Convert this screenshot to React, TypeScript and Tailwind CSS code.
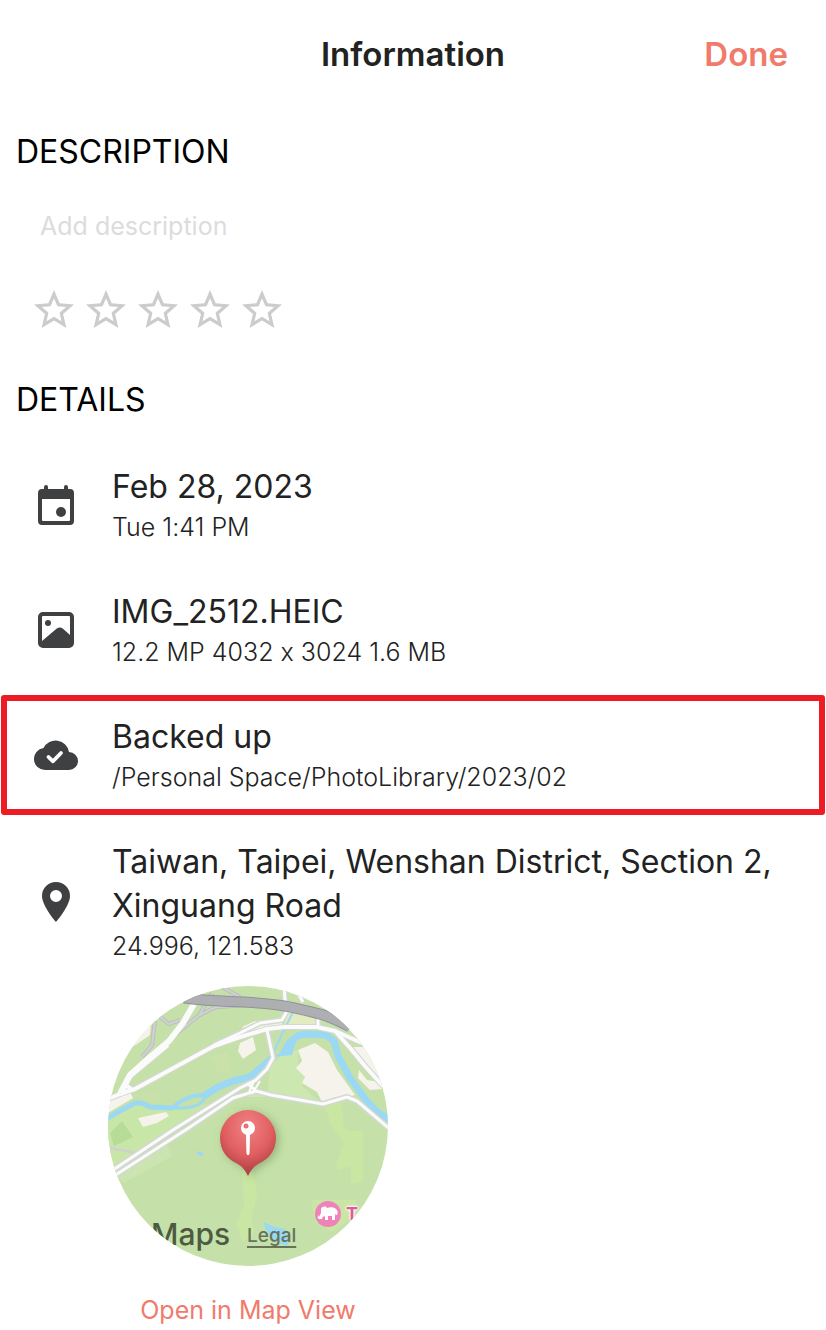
import type { ReactNode } from 'react';
import { useState } from 'react';
import { MdStar, MdStarBorder } from 'react-icons/md';

type DetailRowProps = {
  icon: ReactNode;
  title: string;
  subtitle: string;
  highlighted?: boolean;
};

function CalendarIcon() {
  return (
    <svg viewBox="0 0 36 40" className="h-10 w-9" fill="#3f4042" aria-hidden="true">
      <path
        fillRule="evenodd"
        d="M6 2a2 2 0 0 1 4 0v2h16V2a2 2 0 0 1 4 0v2h2a4 4 0 0 1 4 4v28a4 4 0 0 1-4 4H4a4 4 0 0 1-4-4V8a4 4 0 0 1 4-4h2V2ZM4 14v21a1 1 0 0 0 1 1h26a1 1 0 0 0 1-1V14H4Z"
      />
      <circle cx="23" cy="27" r="5" />
    </svg>
  );
}

function PictureIcon() {
  return (
    <svg viewBox="0 0 36 36" className="h-9 w-9" fill="#3f4042" aria-hidden="true">
      <path
        fillRule="evenodd"
        d="M5 0h26a5 5 0 0 1 5 5v26a5 5 0 0 1-5 5H5a5 5 0 0 1-5-5V5a5 5 0 0 1 5-5Zm0 4a1 1 0 0 0-1 1v24l14.500-12.200a5 5 0 0 1 6.500 0L32 23V5a1 1 0 0 0-1-1H5Z"
      />
      <circle cx="10" cy="11" r="3" />
    </svg>
  );
}

function CloudCheckIcon() {
  return (
    <svg viewBox="0 0 44 30" className="h-[30px] w-11" aria-hidden="true">
      <path
        fill="#3f4042"
        d="M11 30a11 11 0 0 1-1.500-21.900A13.500 13.500 0 0 1 35 12A9 9 0 0 1 35 30H11Z"
      />
      <path
        d="m14.500 17 4.500 4.300 8-8.300"
        fill="none"
        stroke="white"
        strokeWidth="3.800"
        strokeLinecap="round"
        strokeLinejoin="round"
      />
    </svg>
  );
}

function PlaceIcon() {
  return (
    <svg viewBox="0 0 28 40" className="h-10 w-7" fill="#3f4042" aria-hidden="true">
      <path
        fillRule="evenodd"
        d="M14 0a14 14 0 0 1 14 14c0 10-14 26-14 26S0 24 0 14A14 14 0 0 1 14 0Zm0 8a6 6 0 1 0 0 12 6 6 0 0 0 0-12Z"
      />
    </svg>
  );
}

function DetailRow({ icon, title, subtitle, highlighted }: DetailRowProps) {
  return (
    <li
      className={`mx-px flex items-center gap-8 rounded-[3px] border-[6px] py-[14px] pr-8 pl-[25px] ${
        highlighted ? 'border-[#ed1c24]' : 'border-transparent'
      }`}
    >
      <div className="flex w-12 shrink-0 justify-center">{icon}</div>
      <div className="min-w-0">
        <h3 className="text-[32px] leading-[44px]">{title}</h3>
        {/* calt would turn the "x" between dimensions into a multiplication sign */}
        <p className="text-[25px] leading-9 font-light [font-feature-settings:'calt'_0]">{subtitle}</p>
      </div>
    </li>
  );
}

function MapDrawing() {
  return (
    <svg viewBox="0 0 280 280" className="h-full w-full" fill="none" aria-hidden="true">
      <defs>
        <radialGradient id="balloon" cx="0.5" cy="0.25" r="0.75">
          <stop offset="0" stopColor="#ee8283" />
          <stop offset="0.55" stopColor="#e26062" />
          <stop offset="1" stopColor="#a83c3e" />
        </radialGradient>
        <filter id="balloonShadow" x="-40%" y="-40%" width="180%" height="180%">
          <feDropShadow dx="3" dy="2" stdDeviation="4" floodColor="#55703f" floodOpacity="0.4" />
        </filter>
      </defs>

      <rect width="280" height="280" fill="#c5e1a9" />

      {/* lighter and darker parkland */}
      <path d="M132 111 160 106 162 80 175 68 190 64 190 84 197 92 194 100 215 119 162 111Z" fill="#cce8b0" />
      <path d="M0 134 30 117 64 124 100 118 130 104 70 142 0 190Z" fill="#c8e6a8" />
      <path d="M35 106 54 104 50 118 32 114Z" fill="#cae0aa" />
      <path d="M101 71 118 66 122 84 111 86Z" fill="#cae2aa" />
      <path d="M2 147 14 135 25 151 6 160Z" fill="#b7dc98" />
      <path d="M9 190 58 158 64 170 16 197Z" fill="#cbe4b2" />
      <path d="M216 119 233 112 236 144 224 140Z" fill="#c9e7a0" />
      <path d="M220 134 242 145 255 145 255 195 243 198 243 180 230 184 228 178 236 158Z" fill="#c9e7a2" />
      <path d="M134 184 146 186 149 210 143 232 147 246 135 256 128 238 136 220Z" fill="#c9e7a2" />
      <path d="M203 214 248 214 244 232 224 246 207 235Z" fill="#cae5a5" />
      <path d="M180 25 211 32 209 39 176 40Z" fill="#e3ebc0" />

      {/* built-up areas */}
      <g fill="#f6f3ec">
        <path d="M190 64 207 57 220 66 229 84 247 109 239 111 215 118 209 106 194 97 197 91 188 82 194 75Z" />
        <path d="M245 61 265 61 282 96 272 94Z" />
        <path d="M251 84 259 94 272 96 274 103 262 104 250 92Z" />
        <path d="M132 57 145 51 148 64 135 73 130 65Z" />
        <path d="M134 41 147 35 174 35 174 40 140 48Z" />
        <path d="M30 132 58 126 61 130 49 137 35 141Z" />
        <path d="M0 114 22 106 25 112 0 127Z" />
        <path d="M43 36 42 49 26 60 30 42Z" />
      </g>

      {/* water */}
      <g stroke="#9ad8f3" strokeLinejoin="round">
        <path d="M-3 134 10 126 27 117 34 117 42 121 65 122" strokeWidth="5" />
        <path d="M65 122C77 122 92 123 97 111" strokeWidth="3" />
        <path d="M65 121C73 114 83 108 97 109" strokeWidth="4" />
        <path d="M96 110 110 101 125 95 142 91 155 80 166 70" strokeWidth="7" />
        <path d="M177 3 180 18 184 28 175 46 164 70" strokeWidth="2" />
        <path d="M188 50 198 48 218 49 226 55 230 70 242 92 258 114 269 126 283 134" strokeWidth="7" />
      </g>
      <path d="M163 71 171 68 179 54 189 47 198 49 189 54 186 62 184 69 174 70Z" fill="#9ad8f3" />
      <path d="M88 165 96 167 94 170 90 169Z" fill="#9ad8f3" />
      <path d="M155 236 167 241 177 243 182 252 179 260 168 256 160 248Z" fill="#9ad8f3" />

      {/* minor roads, casing first */}
      <g stroke="#b6babb" strokeWidth="4">
        <path d="M47 35 44 59 34 71" />
        <path d="M52 31 61 38 72 34" />
        <path d="M67 49 90 30 108 21 142 19" />
        <path d="M92 28 104 7M114 1 132 11" />
      </g>
      <g stroke="#cfd1d1" strokeWidth="2.500">
        <path d="M47 35 44 59 34 71" />
        <path d="M52 31 61 38 72 34" />
        <path d="M67 49 90 30 108 21 142 19" />
        <path d="M92 28 104 7M114 1 132 11" />
        <path d="M2 162 28 167" />
      </g>

      {/* main roads */}
      <g strokeLinejoin="round">
        <g stroke="#d3d9d0" strokeWidth="6">
          <path d="M86 18 75 37 61 55 42 71 22 89 12 108 0 113" />
          <path d="M60 59 19 93 18 99 24 104" />
          <path d="M12 108 27 103 60 85 106 60 132 51 159 43 176 41 209 41 227 45 254 57" />
          <path d="M106 59 132 47 152 37 174 34 178 27 176 0" />
          <path d="M227 45 243 63 257 80 275 100" />
          <path d="M159 44 165 72 159 83 148 94 132 102 65 144 5 184" />
          <path d="M139 97 148 105 163 109 215 118 239 111 249 115 283 144" />
          <path d="M148 105 125 112 79 143 6 190" />
          <path d="M210 30V41M189 5 195 16" />
        </g>
        <path d="M86 18 75 37 61 55 42 71 22 89 12 108" stroke="#fafbfa" strokeWidth="6" />
        <g stroke="#fafbfa" strokeWidth="4">
          <path d="M22 89 12 108 0 113M60 59 19 93 18 99 24 104" />
          <path d="M12 108 27 103 60 85 106 60 132 51 159 43 176 41 209 41 227 45 254 57" />
          <path d="M106 59 132 47 152 37 174 34 178 27 176 0" strokeWidth="3" />
          <path d="M227 45 243 63 257 80 275 100" />
          <path d="M159 44 165 72 159 83 148 94 132 102 65 144 5 184" strokeWidth="3" />
          <path d="M139 97 148 105 163 109 215 118 239 111 249 115 283 144" strokeWidth="3" />
          <path d="M148 105 125 112 79 143 6 190" strokeWidth="3" />
          <path d="M210 30V41M189 5 195 16" strokeWidth="3" />
          <path d="M146 95 141 106M152 95 144 108" strokeWidth="2" />
        </g>
      </g>

      {/* highway */}
      <path d="M76 12C110 17 150 14 182 21S220 29 242 41" stroke="#919398" strokeWidth="11" />
      <path d="M76 12C110 17 150 14 182 21S220 29 242 41" stroke="#aeafb3" strokeWidth="9" />

      {/* zoo marker */}
      <circle cx="220" cy="228" r="13" fill="#ef83b8" />
      <path
        d="M213 223c1-3 5-3 6-1 3-1 7-1 9 1 2 2 2 4 1 6h-1v-2l-1 3v4h-3v-4h-4v4h-3v-4c-2 1-3 1-3 3h-3c-2-1-1-3-1-4l1 2 2-4Z"
        fill="white"
      />

      {/* pin balloon */}
      <path
        d="M140 124a28 28 0 0 1 28 28c0 12-7 21-16 25-6 3-9 7-12 13-3-6-6-10-12-13-9-4-16-13-16-25a28 28 0 0 1 28-28Z"
        fill="url(#balloon)"
        filter="url(#balloonShadow)"
      />
      <path d="M138.500 146h3l-.5 22-1 1-1-1Z" fill="white" stroke="white" strokeWidth="1" />
      <circle cx="140" cy="142" r="7" fill="white" />
      <circle cx="138" cy="140" r="2.500" fill="#e87172" />
    </svg>
  );
}

function MapPreview() {
  return (
    <div className="relative h-[280px] w-[280px] overflow-hidden rounded-full">
      <MapDrawing />
      <span className="absolute top-[228px] left-[43px] text-[30px] leading-10 font-medium text-[#4d5b42]">Maps</span>
      <a
        href="#legal"
        className="absolute top-[238px] left-[139px] text-[19px] leading-6 font-medium text-[#64735a] underline decoration-2 underline-offset-4"
      >
        Legal
      </a>
      <span className="absolute top-[216px] left-[238px] text-lg leading-6 font-bold text-[#e4579c] [text-shadow:0_0_2px_white,0_0_2px_white,0_0_3px_white,0_0_3px_white]">
        T
      </span>
    </div>
  );
}

export default function App() {
  const [rating, setRating] = useState(0);

  return (
    <main className="bg-white font-[Inter,'Liberation_Sans',sans-serif] text-[#222222]">
      <header className="grid grid-cols-[1fr_auto_1fr] items-center px-[38px] pt-8">
        <h1 className="col-start-2 text-[33px] leading-[44px] font-semibold">Information</h1>
        <button type="button" className="justify-self-end text-[33px] leading-[44px] font-semibold text-[#f07b6b]">
          Done
        </button>
      </header>

      <section className="pt-[54px]">
        <h2 className="px-4 text-[32px] leading-[44px] text-black">DESCRIPTION</h2>
        <div className="px-10 pt-8">
          <input
            type="text"
            aria-label="Description"
            placeholder="Add description"
            className="block h-10 w-full text-[25px] outline-none placeholder:text-[#dcdcdc]"
          />
        </div>
        <div className="flex gap-1 px-[30px] pt-10" role="group" aria-label="Rating">
          {[1, 2, 3, 4, 5].map((value) => (
            <button
              key={value}
              type="button"
              onClick={() => setRating(value === rating ? 0 : value)}
              aria-label={`Rate ${value}`}
              className="h-12 w-12 text-[#cccccc]"
            >
              {value <= rating ? <MdStar className="h-12 w-12" /> : <MdStarBorder className="h-12 w-12" />}
            </button>
          ))}
        </div>
      </section>

      <section className="pt-11">
        <h2 className="px-4 text-[32px] leading-[44px] text-black">DETAILS</h2>
        <ul className="flex flex-col gap-[5px] pt-[23px]">
          <DetailRow icon={<CalendarIcon />} title="Feb 28, 2023" subtitle="Tue 1:41 PM" />
          <DetailRow icon={<PictureIcon />} title="IMG_2512.HEIC" subtitle="12.2 MP 4032 x 3024 1.6 MB" />
          <DetailRow
            icon={<CloudCheckIcon />}
            title="Backed up"
            subtitle="/Personal Space/PhotoLibrary/2023/02"
            highlighted
          />
          <DetailRow
            icon={<PlaceIcon />}
            title="Taiwan, Taipei, Wenshan District, Section 2, Xinguang Road"
            subtitle="24.996, 121.583"
          />
        </ul>
        <div className="ml-[108px] flex w-[280px] flex-col items-center gap-6 pt-0.5">
          <MapPreview />
          <a href="#map" className="text-[25px] leading-10 text-[#f07b6b]">
            Open in Map View
          </a>
        </div>
      </section>
    </main>
  );
}
